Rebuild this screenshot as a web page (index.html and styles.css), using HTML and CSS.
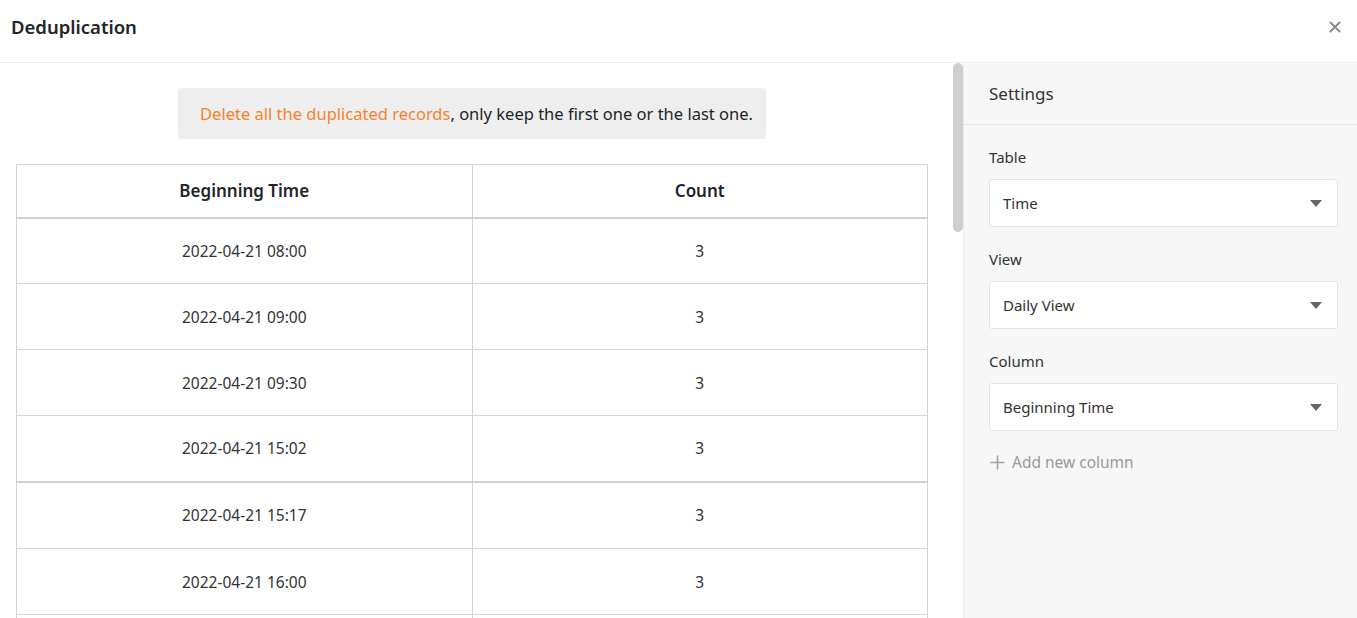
FILE: index.html
```html
<!DOCTYPE html>
<html>
<head>
<meta charset="utf-8">
<link rel="stylesheet" href="styles.css">
</head>
<body>
<div class="dialog">
  <header class="dialog-header">
    <h1 class="dialog-title">Deduplication</h1>
    <svg class="close" width="12" height="12" viewBox="0 0 12 12"><path d="M1.5 1.5 L10.5 10.5 M10.5 1.5 L1.5 10.5" stroke="#8a8a8a" stroke-width="2" stroke-linecap="round"/></svg>
  </header>
  <div class="dialog-body">
    <main class="content">
      <div class="notice-wrap">
        <div class="notice"><span class="accent">Delete all the duplicated records</span>, only keep the first one or the last one.</div>
      </div>
      <table class="result">
        <thead>
          <tr><th>Beginning Time</th><th>Count</th></tr>
        </thead>
        <tbody>
          <tr><td>2022-04-21 08:00</td><td>3</td></tr>
          <tr><td>2022-04-21 09:00</td><td>3</td></tr>
          <tr><td>2022-04-21 09:30</td><td>3</td></tr>
          <tr class="split"><td>2022-04-21 15:02</td><td>3</td></tr>
          <tr><td>2022-04-21 15:17</td><td>3</td></tr>
          <tr><td>2022-04-21 16:00</td><td>3</td></tr>
          <tr><td></td><td></td></tr>
        </tbody>
      </table>
      <div class="scrollbar"></div>
    </main>
    <aside class="settings">
      <div class="settings-title">Settings</div>
      <div class="settings-body">
        <div class="field">
          <div class="label">Table</div>
          <div class="select"><span>Time</span><span class="caret"></span></div>
        </div>
        <div class="field">
          <div class="label">View</div>
          <div class="select"><span>Daily View</span><span class="caret"></span></div>
        </div>
        <div class="field">
          <div class="label">Column</div>
          <div class="select"><span>Beginning Time</span><span class="caret"></span></div>
        </div>
        <div class="add"><svg class="plus" width="15" height="15" viewBox="0 0 15 15"><path d="M7.5 0.5 V14.5 M0.5 7.5 H14.5" stroke="#a0a0a0" stroke-width="1.6"/></svg>Add new column</div>
      </div>
    </aside>
  </div>
</div>
</body>
</html>
```
FILE: styles.css
```css
* { box-sizing: border-box; }
html, body { margin: 0; height: 100%; overflow: hidden; }
body {
  font-family: "Noto Sans", "Open Sans", sans-serif;
  color: #212529;
  background: #fff;
}
.dialog { display: flex; flex-direction: column; height: 618px; }
.dialog-header {
  height: 63px;
  flex: none;
  display: flex;
  align-items: center;
  justify-content: space-between;
  padding: 0 16px 9px 11px;
  border-bottom: 1px solid #ececec;
}
.dialog-title { margin: 0; font-size: 18.5px; font-weight: 600; color: #212529; }
.close { display: block; }
.dialog-body { flex: 1; display: flex; min-height: 0; }
.content {
  position: relative;
  width: 963px;
  flex: none;
  padding: 25px 35px 0 16px;
  overflow: hidden;
}
.notice-wrap { display: flex; justify-content: center; margin-bottom: 25px; }
.notice {
  background: #eeeeee;
  border-radius: 4px;
  padding: 0 13px 0 22px;
  height: 51px;
  display: flex;
  align-items: center;
  font-size: 16.5px;
  color: #212529;
}
.accent { color: #f7822d; }
.result {
  width: 912px;
  border-collapse: collapse;
  table-layout: fixed;
  font-size: 15.5px;
}
.result th, .result td {
  border: 1px solid #d4d4d4;
  text-align: center;
}
.result th {
  height: 53px;
  font-size: 17px;
  font-weight: 600;
  border-bottom: 2px solid #d0d0d0;
}
.result td { height: 66px; color: #333; }
.result tr.split td { border-bottom: 2px solid #d0d0d0; }
.result tr.split + tr td { height: 67px; }
.scrollbar {
  position: absolute;
  top: 0;
  left: 953px;
  width: 10px;
  height: 169px;
  border-radius: 5px;
  background: #cfcfd3;
}
.settings {
  flex: 1;
  background: #f7f7f7;
  border-left: 1px solid #ececec;
}
.settings-title {
  height: 62px;
  padding-left: 25px;
  display: flex;
  align-items: center;
  font-size: 17px;
  color: #333;
  border-bottom: 1px solid #e4e4e4;
}
.settings-body { padding: 20px 19px 0 25px; }
.field { margin-bottom: 20px; }
.label { font-size: 15px; color: #333; height: 24px; line-height: 24px; margin-bottom: 10px; }
.select {
  height: 48px;
  background: #fff;
  border: 1px solid #e2e4e8;
  border-radius: 3px;
  display: flex;
  align-items: center;
  justify-content: space-between;
  padding: 0 15px 0 13px;
  font-size: 15px;
  color: #333;
}
.caret {
  width: 0; height: 0;
  border-left: 6px solid transparent;
  border-right: 6px solid transparent;
  border-top: 7px solid #666;
}
.add { font-size: 15.5px; color: #9a9a9a; display: flex; align-items: center; margin-top: 0; gap: 7px; }
.plus { display: block; margin-left: 1px; }
```
